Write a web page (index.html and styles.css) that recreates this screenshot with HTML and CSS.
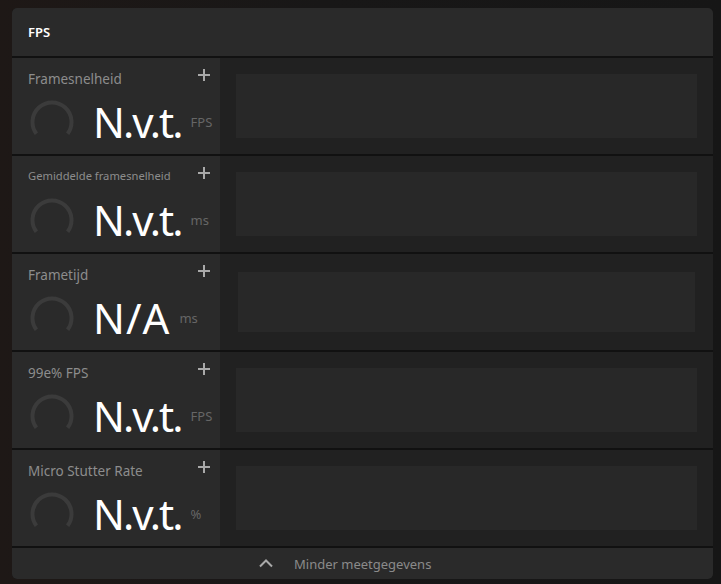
FILE: index.html
```html
<!DOCTYPE html>
<html lang="nl">
<head>
    <meta http-equiv="content-type" content="text/html; charset=utf-8" />
    <title>FPS</title>
    <link rel="stylesheet" href="styles.css">
</head>
<body>
<div class="panel">
    <div class="panel-header">FPS</div>

    <div class="metric">
        <div class="metric-info">
            <div class="metric-top">
                <span class="metric-label">Framesnelheid</span>
                <svg class="plus" width="12" height="12" viewBox="0 0 12 12"><path d="M6 0V12M0 6H12"/></svg>
            </div>
            <div class="metric-reading">
                <svg class="gauge" width="44" height="44" viewBox="0 0 44 44"><path d="M6.4 33.7A19.5 19.5 0 1 1 37.6 33.7"/></svg>
                <span class="metric-value">N.v.t.</span>
                <span class="metric-unit">FPS</span>
            </div>
        </div>
        <div class="metric-chart"><div class="chart-area"></div></div>
    </div>

    <div class="metric">
        <div class="metric-info">
            <div class="metric-top">
                <span class="metric-label small">Gemiddelde framesnelheid</span>
                <svg class="plus" width="12" height="12" viewBox="0 0 12 12"><path d="M6 0V12M0 6H12"/></svg>
            </div>
            <div class="metric-reading">
                <svg class="gauge" width="44" height="44" viewBox="0 0 44 44"><path d="M6.4 33.7A19.5 19.5 0 1 1 37.6 33.7"/></svg>
                <span class="metric-value">N.v.t.</span>
                <span class="metric-unit">ms</span>
            </div>
        </div>
        <div class="metric-chart"><div class="chart-area"></div></div>
    </div>

    <div class="metric">
        <div class="metric-info">
            <div class="metric-top">
                <span class="metric-label">Frametijd</span>
                <svg class="plus" width="12" height="12" viewBox="0 0 12 12"><path d="M6 0V12M0 6H12"/></svg>
            </div>
            <div class="metric-reading">
                <svg class="gauge" width="44" height="44" viewBox="0 0 44 44"><path d="M6.4 33.7A19.5 19.5 0 1 1 37.6 33.7"/></svg>
                <span class="metric-value na">N/A</span>
                <span class="metric-unit">ms</span>
            </div>
        </div>
        <div class="metric-chart wide"><div class="chart-area"></div></div>
    </div>

    <div class="metric">
        <div class="metric-info">
            <div class="metric-top">
                <span class="metric-label">99e% FPS</span>
                <svg class="plus" width="12" height="12" viewBox="0 0 12 12"><path d="M6 0V12M0 6H12"/></svg>
            </div>
            <div class="metric-reading">
                <svg class="gauge" width="44" height="44" viewBox="0 0 44 44"><path d="M6.4 33.7A19.5 19.5 0 1 1 37.6 33.7"/></svg>
                <span class="metric-value">N.v.t.</span>
                <span class="metric-unit">FPS</span>
            </div>
        </div>
        <div class="metric-chart"><div class="chart-area"></div></div>
    </div>

    <div class="metric">
        <div class="metric-info">
            <div class="metric-top">
                <span class="metric-label">Micro Stutter Rate</span>
                <svg class="plus" width="12" height="12" viewBox="0 0 12 12"><path d="M6 0V12M0 6H12"/></svg>
            </div>
            <div class="metric-reading">
                <svg class="gauge" width="44" height="44" viewBox="0 0 44 44"><path d="M6.4 33.7A19.5 19.5 0 1 1 37.6 33.7"/></svg>
                <span class="metric-value">N.v.t.</span>
                <span class="metric-unit">%</span>
            </div>
        </div>
        <div class="metric-chart"><div class="chart-area"></div></div>
    </div>

    <div class="panel-footer">
        <svg class="chevron" width="14" height="9" viewBox="0 0 14 9"><path d="M1 7.5L7 1.5L13 7.5"/></svg>
        <span>Minder meetgegevens</span>
    </div>
</div>
</body>
</html>
```

FILE: styles.css
```css
html, body {
    margin: 0;
    height: 100%;
}
body {
    background: linear-gradient(to right, #1e1816, #181717 45%, #161616);
    font-family: "Noto Sans", "Open Sans", sans-serif;
}
.panel {
    margin: 8px 8px 0 12px;
    border-radius: 5px;
    overflow: hidden;
    background: #111;
}
.panel-header {
    height: 48px;
    display: flex;
    align-items: center;
    padding-left: 16px;
    background: #2a2a2a;
    color: #fff;
    font-size: 13px;
    font-weight: 600;
}
.metric {
    display: flex;
    height: 96px;
    border-top: 2px solid #111;
}
.metric-info {
    width: 208px;
    box-sizing: border-box;
    padding: 10px 10px 0 16px;
    background: #2a2a2a;
}
.metric-top {
    display: flex;
    justify-content: space-between;
    align-items: flex-start;
    height: 18px;
}
.metric-label {
    margin-top: 2px;
    color: #8d8d8d;
    font-size: 13.5px;
    line-height: 18px;
}
.metric-label.small {
    margin-top: 1px;
    font-size: 11.2px;
}
.plus {
    margin-top: 1px;
}
.plus path {
    stroke: #a9a9a9;
    stroke-width: 2;
    fill: none;
}
.metric-reading {
    display: flex;
    align-items: center;
    height: 44px;
    margin-top: 14px;
}
.gauge {
    margin-left: 2px;
    flex: none;
}
.gauge path {
    stroke: #3b3b3b;
    stroke-width: 4;
    fill: none;
}
.metric-value {
    margin-left: 19px;
    color: #fff;
    font-size: 42px;
    line-height: 1;
    letter-spacing: -2px;
}
.metric-value.na {
    letter-spacing: 1px;
}
.metric-unit {
    margin-left: 9px;
    color: #666;
    font-size: 13px;
}
.metric-chart {
    flex: 1;
    padding: 16px;
    background: #212121;
}
.metric-chart.wide {
    padding: 18px;
}
.chart-area {
    height: 100%;
    background: #282828;
}
.panel-footer {
    height: 31px;
    border-top: 2px solid #111;
    background: #2a2a2a;
    display: flex;
    align-items: center;
    padding-left: 247px;
    color: #8a8a8a;
    font-size: 13px;
}
.chevron {
    margin-right: 21px;
}
.chevron path {
    stroke: #a9a9a9;
    stroke-width: 2;
    fill: none;
}
```
